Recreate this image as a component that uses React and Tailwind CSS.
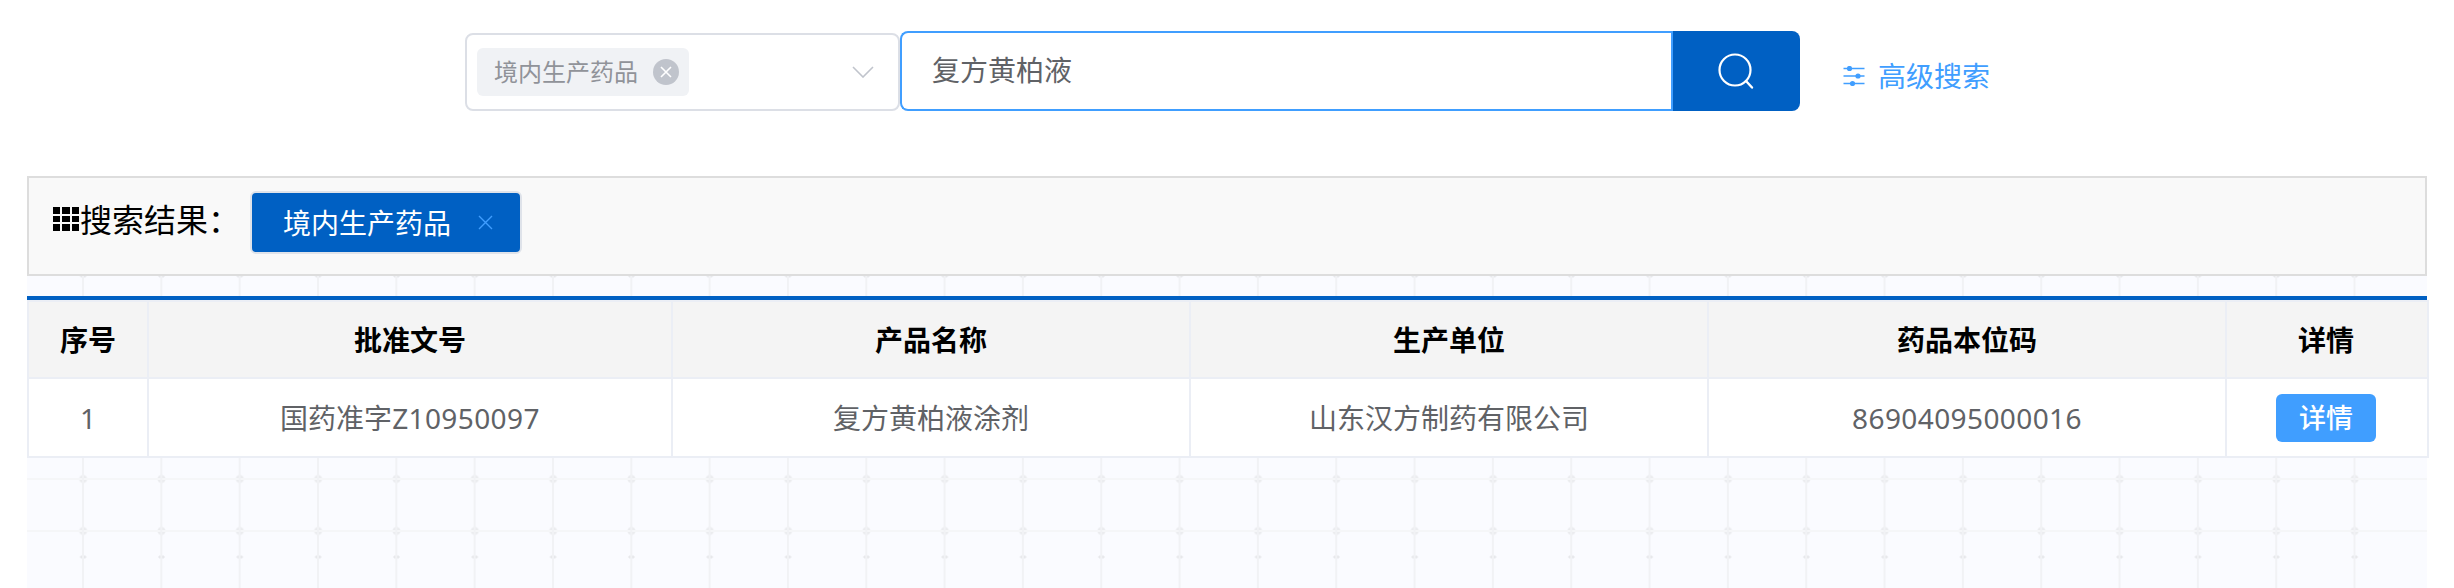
const font = "font-['Noto_Sans','Noto_Sans_CJK_SC',sans-serif]";

function SlidersIcon() {
  return (
    <svg width="22" height="20" viewBox="0 0 22 20" fill="none" className="shrink-0">
      <path d="M0.5 2.5H21.5M0.5 10H21.5M0.5 17.5H21.5" stroke="#409eff" strokeWidth="1.6" />
      <circle cx="6.5" cy="2.5" r="2.6" fill="#409eff" />
      <circle cx="15" cy="10" r="2.6" fill="#409eff" />
      <circle cx="9.5" cy="17.5" r="2.6" fill="#409eff" />
    </svg>
  );
}

function GridIcon() {
  const cells = Array.from({ length: 9 });
  return (
    <div className="mb-[2px] grid h-[24px] w-[26px] shrink-0 grid-cols-3 grid-rows-3 gap-[2px]">
      {cells.map((_, i) => (
        <span key={i} className="bg-black" />
      ))}
    </div>
  );
}

const headers = ["序号", "批准文号", "产品名称", "生产单位", "药品本位码"];
const thClass = "border-2 border-[#ebeef5] p-0 text-center text-[28px] font-bold text-black";
const cellClass = "border-2 border-[#ebeef5] p-0 text-center text-[28px] text-[#606266]";

export default function App() {
  return (
    <div className={`flex h-[588px] w-full flex-col overflow-hidden bg-white ${font}`}>
      <div className="flex h-[176px] shrink-0 items-start justify-center pl-[1px] pt-[31px]">
        <div className="mt-[2px] flex h-[78px] w-[435px] items-center rounded-[8px] border-2 border-[#dcdfe6] bg-white pl-[10px] pr-[24px]">
          <div className="flex h-[48px] w-[212px] items-center rounded-[6px] bg-[#f0f2f5] pl-[17px]">
            <span className="text-[24px] leading-none text-[#909399]">境内生产药品</span>
            <span className="ml-[15px] flex h-[26px] w-[26px] items-center justify-center rounded-full bg-[#c0c4cc]">
              <svg width="14" height="14" viewBox="0 0 14 14" fill="none">
                <path d="M2 2L12 12M12 2L2 12" stroke="#fff" strokeWidth="1.6" />
              </svg>
            </span>
          </div>
          <svg width="22" height="12" viewBox="0 0 22 12" fill="none" className="ml-auto">
            <path d="M1 1L11 11L21 1" stroke="#c0c4cc" strokeWidth="1.6" />
          </svg>
        </div>
        <div className="flex h-[80px] w-[771px] items-center rounded-l-[8px] border-2 border-r-0 border-[#409eff] bg-white pb-[2px] pl-[30px]">
          <span className="text-[28px] leading-none text-[#606266]">复方黄柏液</span>
        </div>
        <button className="flex h-[80px] w-[129px] items-center justify-center rounded-r-[8px] border-l-2 border-[#409eff] bg-[#0060c3]">
          <svg width="38" height="38" viewBox="0 0 38 38" fill="none">
            <circle cx="18" cy="18" r="15.5" stroke="#fff" strokeWidth="2.2" />
            <path d="M29 29L35 35.5" stroke="#fff" strokeWidth="2.4" strokeLinecap="round" />
          </svg>
        </button>
        <a className="ml-[43px] mt-[24px] flex items-center gap-[13px] text-[28px] leading-[42px] text-[#409eff]">
          <SlidersIcon />
          高级搜索
        </a>
      </div>

      <div className="mx-[27px] flex-1 bg-[#fafbff] [background-image:linear-gradient(90deg,#f1f2f5_2px,transparent_2px),linear-gradient(#f5f6f8_2px,transparent_2px),linear-gradient(#f5f6f8_2px,transparent_2px),radial-gradient(circle,#ebecef_3.5px,transparent_4.5px),radial-gradient(circle,#ebecef_3.5px,transparent_4.5px),radial-gradient(ellipse_4px_1.5px,#e6e7ea_80%,transparent_100%)] [background-position:55px_0,0_302px,0_354px,17px_162.5px,17px_214.5px,17px_240.5px] [background-size:78.33px_100%,100%_281px,100%_281px,78.33px_281px,78.33px_281px,78.33px_281px]">
        <div className="flex h-[100px] items-start border-2 border-[#dddddd] bg-[#f9f9f9] pl-[24px] pt-[13px]">
          <div className="mt-[13px] flex items-center">
            <GridIcon />
            <span className="ml-[1px] text-[32px] leading-[32px] text-black">搜索结果：</span>
          </div>
          <div className="ml-[10px] flex h-[63px] w-[272px] items-center rounded-[6px] border-2 border-[#dfe3ea] bg-[#0060c3] pl-[31px]">
            <span className="text-[28px] leading-none text-white">境内生产药品</span>
            <svg width="15" height="15" viewBox="0 0 15 15" fill="none" className="ml-[27px]">
              <path d="M1 1L14 14M14 1L1 14" stroke="#409eff" strokeWidth="1.4" />
            </svg>
          </div>
        </div>

        <div className="mt-[20px] border-t-4 border-[#0060c3]">
          <table className="w-full table-fixed border-collapse bg-white">
            <colgroup>
              <col className="w-[120px]" />
              <col className="w-[524px]" />
              <col className="w-[518px]" />
              <col className="w-[518px]" />
              <col className="w-[518px]" />
              <col className="w-[202px]" />
            </colgroup>
            <thead>
              <tr className="h-[77px] bg-[#f4f4f4]">
                {headers.map((h) => (
                  <th key={h} className={thClass}>
                    {h}
                  </th>
                ))}
                <th className={`${thClass} pr-[2px]`}>详情</th>
              </tr>
            </thead>
            <tbody>
              <tr className="h-[79px]">
                <td className={cellClass}>1</td>
                <td className={cellClass}>
                  国药准字<span className="tracking-[0.4px]">Z10950097</span>
                </td>
                <td className={cellClass}>复方黄柏液涂剂</td>
                <td className={cellClass}>山东汉方制药有限公司</td>
                <td className={cellClass}>
                  <span className="tracking-[0.4px]">86904095000016</span>
                </td>
                <td className="border-2 border-[#ebeef5] p-0 pr-[2px] text-center">
                  <button className="inline-flex h-[48px] w-[100px] items-center justify-center rounded-[6px] bg-[#409eff] align-middle text-[27px] font-medium leading-none text-white">
                    详情
                  </button>
                </td>
              </tr>
            </tbody>
          </table>
        </div>
      </div>
    </div>
  );
}
